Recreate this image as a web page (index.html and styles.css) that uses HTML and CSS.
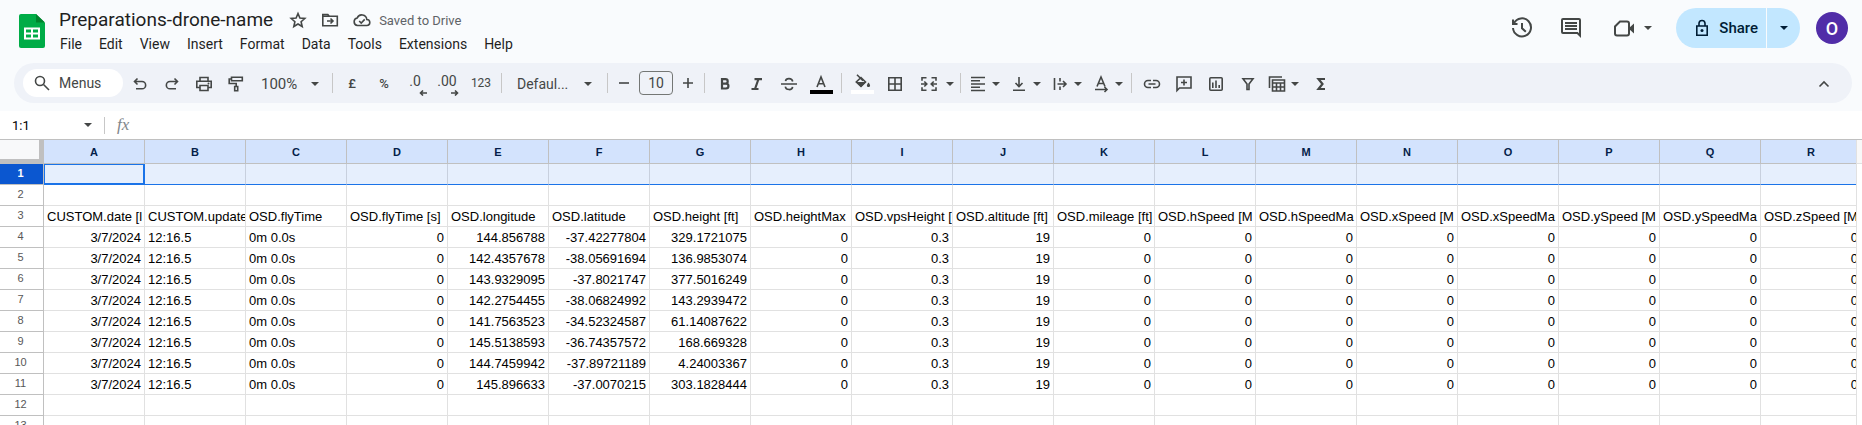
FILE: index.html
```html
<!DOCTYPE html>
<html lang="en">
<head>
<meta charset="utf-8">
<title>Preparations-drone-name</title>
<link rel="stylesheet" href="styles.css">
</head>
<body>
<div class="app">
<header class="chrome">
  <div class="titlebar">
    <svg class="logo" viewBox="0 0 26 34"><path fill="#00ac47" d="M2 0h15l9 9v23a2 2 0 0 1-2 2H2a2 2 0 0 1-2-2V2a2 2 0 0 1 2-2z"/><path fill="#00832d" d="M17 0l9 8.500h-9z"/><path fill="#fff" fill-rule="evenodd" d="M5 13.500h16v12H5zM7 15.500v3h5v-3zm7 0v3h5v-3zm-7 5v3h5v-3zm7 0v3h5v-3z"/></svg>
    <div class="doc">
      <div class="doc-row">
        <h1 class="doc-name">Preparations-drone-name</h1>
        <button class="mini" aria-label="Star"><svg class="ic" viewBox="0 0 20 20"><path class="s" d="M10 3.500l1.900 4.600 4.900.4-3.700 3.200 1.100 4.800-4.200-2.500-4.200 2.500 1.100-4.800-3.700-3.200 4.900-.4z"/></svg></button>
        <button class="mini" aria-label="Move"><svg class="ic" viewBox="0 0 20 20"><path class="s" d="M2.800 4.500h5l1.500 1.800h8v9.500H2.800zM2.800 6.300H9M7 11h6M10.500 8.500L13 11l-2.500 2.500"/></svg></button>
        <button class="saved"><svg class="ic" viewBox="0 0 20 20"><path class="s" d="M5.500 15.500a3.800 3.800 0 0 1-.3-7.500 5 5 0 0 1 9.600 1.500 3 3 0 0 1 0 6zM7.200 11l2 2 3.500-3.600"/></svg>Saved to Drive</button>
      </div>
      <nav class="menus">
        <button>File</button><button>Edit</button><button>View</button><button>Insert</button><button>Format</button><button>Data</button><button>Tools</button><button>Extensions</button><button>Help</button>
      </nav>
    </div>
    <div class="actions">
      <button class="act" aria-label="History"><svg class="ic24" viewBox="0 0 24 24"><path class="s2" d="M4 7.200A9 9 0 1 1 3 12M3 3.500V8h4.500M12 7v5.200l3.800 3.600"/></svg></button>
      <button class="act" aria-label="Comments"><svg class="ic24" viewBox="0 0 24 24"><path d="M22 4a2 2 0 0 0-2-2H4a2 2 0 0 0-2 2v12a2 2 0 0 0 2 2h14l4 4zm-2 13.200L18.800 16H4V4h16zM6 12h12v2H6zm0-3h12v2H6zm0-3h12v2H6z"/></svg></button>
      <button class="meet" aria-label="Meet"><svg class="ic24" viewBox="0 0 24 24"><path class="s2" d="M8 5.500h7a2 2 0 0 1 2 2v10a2 2 0 0 1-2 2H5a2 2 0 0 1-2-2V10.500z"/><path d="M17 12l5-4.500v10L17 13z"/></svg><i class="caret"></i></button>
      <div class="share">
        <button class="share-main"><svg class="ic" viewBox="0 0 20 20"><path class="s" d="M4.800 8h10.400v9.300H4.800zM7 8V5.500a3 3 0 0 1 6 0V8"/><circle cx="10" cy="12.600" r="1.500"/></svg>Share</button>
        <button class="share-more" aria-label="Share options"><i class="caret"></i></button>
      </div>
      <button class="avatar">O</button>
    </div>
  </div>
  <div class="toolbar">
    <button class="search"><svg class="ic" viewBox="0 0 20 20"><circle class="s" cx="8" cy="8" r="4.500"/><path class="s" d="M11.500 11.500l5.500 5.500"/></svg>Menus</button>
    <button class="tb" aria-label="Undo"><svg class="ic" viewBox="0 0 20 20"><path class="s" d="M7.500 4.500L4.500 7.500l3 3M4.800 7.500H12a3.500 3.500 0 0 1 0 7.300H6"/></svg></button>
    <button class="tb" aria-label="Redo"><svg class="ic" viewBox="0 0 20 20"><path class="s" d="M12.500 4.500l3 3-3 3M15.200 7.500H8a3.500 3.500 0 0 0 0 7.300h6"/></svg></button>
    <button class="tb" aria-label="Print"><svg class="ic" viewBox="0 0 20 20"><path class="s" d="M6 7V3.500h8V7M5.500 13.500H2.800V7.200h14.400v6.300h-2.700M6 11.500h8v5H6z"/><circle cx="14.500" cy="9.500" r="1"/></svg></button>
    <button class="tb" aria-label="Paint format"><svg class="ic" viewBox="0 0 20 20"><path class="s" d="M5.500 3.200h10.800v3.500H5.500zM5.500 5H3.200v4.500h7v3M8.700 12.500h3v4.300h-3z"/></svg></button>
    <button class="tb zoom">100%<i class="caret"></i></button>
    <i class="sep"></i>
    <button class="tb fmt">£</button>
    <button class="tb fmt">%</button>
    <button class="tb dec">.0<svg class="arrow" viewBox="0 0 8 6"><path class="s" d="M8 3H1.500M4 .5L1.500 3 4 5.500"/></svg></button>
    <button class="tb dec">.00<svg class="arrow" viewBox="0 0 8 6"><path class="s" d="M0 3h6.500M4 .5L6.500 3 4 5.500"/></svg></button>
    <button class="tb fmt small">123</button>
    <i class="sep"></i>
    <button class="tb font">Defaul...<i class="caret"></i></button>
    <i class="sep"></i>
    <button class="tb step" aria-label="Decrease"><svg class="ic" viewBox="0 0 20 20"><path class="s" d="M5 10h10"/></svg></button>
    <input class="size" value="10" aria-label="Font size">
    <button class="tb step" aria-label="Increase"><svg class="ic" viewBox="0 0 20 20"><path class="s" d="M5 10h10M10 5v10"/></svg></button>
    <i class="sep"></i>
    <button class="tb" aria-label="Bold"><svg class="ic" viewBox="0 0 20 20"><path class="b" d="M7 5.200h3.500a2.200 2.200 0 0 1 0 4.400H7zM7 9.600h4a2.400 2.400 0 0 1 0 4.900H7z"/></svg></button>
    <button class="tb" aria-label="Italic"><svg class="ic" viewBox="0 0 20 20"><path class="b" d="M7.500 5.200h7.500M4.500 15H11.500M11.500 5l-3.500 10"/></svg></button>
    <button class="tb" aria-label="Strikethrough"><svg class="ic" viewBox="0 0 20 20"><path class="s" d="M2 10h16M13.700 7.500C13 3.700 7 3.700 6.500 7.200M6.300 12.700c.6 3.800 7 3.800 7.300.2"/></svg></button>
    <button class="tb color" aria-label="Text color"><svg class="ic" viewBox="0 0 20 20"><path class="s" d="M6 13l4-10 4 10M7.500 9.800h5"/></svg><i class="swatch black"></i></button>
    <i class="sep"></i>
    <button class="tb color" aria-label="Fill color"><svg class="ic" viewBox="0 0 20 20"><path class="s" d="M5 .8l6 6M9 3.500L4.300 8 9 12.300 13.500 8z"/><path d="M4 8h10l-5 5zM16.500 8.500c2.500 3 1.700 4.500 0 4.500s-2.500-1.500 0-4.500z"/></svg><i class="swatch white"></i></button>
    <button class="tb borders" aria-label="Borders"><svg class="ic" viewBox="0 0 20 20"><path class="s" d="M3.800 3.800h12.400v12.400H3.800zM10 4v12M4 10h12"/></svg></button>
    <button class="tb split merge" aria-label="Merge"><svg class="ic" viewBox="0 0 20 20"><path class="s" d="M7.500 3.800H3v3M12.500 3.800H17v3M7.500 16.200H3v-3M12.500 16.200H17v-3M2 10h5.500M5.300 7.500L7.800 10l-2.500 2.500M18 10h-5.500M14.700 7.500L12.200 10l2.500 2.500"/></svg><i class="caret"></i></button>
    <i class="sep tight"></i>
    <button class="tb split" aria-label="Horizontal align"><svg class="ic" viewBox="0 0 20 20"><path class="s" d="M3 3.500h14M3 6.750h9M3 10h14M3 13.250h9M3 16.500h14"/></svg><i class="caret"></i></button>
    <button class="tb split" aria-label="Vertical align"><svg class="ic" viewBox="0 0 20 20"><path class="s" d="M10 3v9M6.500 9l3.500 3.500L13.500 9M4 16.200h12"/></svg><i class="caret"></i></button>
    <button class="tb split" aria-label="Wrapping"><svg class="ic" viewBox="0 0 20 20"><path class="s" d="M4.500 4v12M10 4v3.500M10 12.500V16M7.500 10h8M13 7l3 3-3 3"/></svg><i class="caret"></i></button>
    <button class="tb split" aria-label="Rotation"><svg class="ic" viewBox="0 0 20 20"><path class="s" d="M6 12.500l4-9.500 4 9.500M7.500 9.500h5M4 15.500h11.500M13.500 13l2.500 2.500-2.500 2.500"/></svg><i class="caret"></i></button>
    <i class="sep tight"></i>
    <button class="tb" aria-label="Link"><svg class="ic" viewBox="0 0 20 20"><path class="s" d="M9 6.500H6a3.500 3.500 0 0 0 0 7h3M11 6.500h3a3.500 3.500 0 0 1 0 7h-3M6.500 10h7"/></svg></button>
    <button class="tb" aria-label="Comment"><svg class="ic" viewBox="0 0 20 20"><path class="s" d="M3 3h14v11H5.500L3 16.500zM10 5.500v6M7 8.500h6"/></svg></button>
    <button class="tb" aria-label="Chart"><svg class="ic" viewBox="0 0 20 20"><rect class="s" x="3.800" y="3.800" width="12.400" height="12.400" rx="1"/><path class="s" d="M6.800 8.500V14M10 6.500V14M13.200 11v3"/></svg></button>
    <button class="tb" aria-label="Filter"><svg class="ic" viewBox="0 0 20 20"><path class="s" d="M5 4.700h10L11 10v5.500H9V10z"/></svg></button>
    <button class="tb split" aria-label="Filter views"><svg class="ic" viewBox="0 0 20 20"><path class="s" d="M2.500 14V3H15M5.500 6h12v11h-12zM5.500 9h12M5.500 13h12M9.500 9v8M13.500 9v8"/></svg><i class="caret"></i></button>
    <button class="tb" aria-label="Functions"><svg class="ic" viewBox="0 0 20 20"><path class="b" d="M14 5H7.500l4 5-4 5H14"/></svg></button>
    <button class="tb collapse" aria-label="Hide menus"><svg class="ic" viewBox="0 0 20 20"><path class="s" d="M5.500 12.500L10 8l4.500 4.500"/></svg></button>
  </div>
</header>
<div class="formula">
  <button class="range">1:1<i class="caret"></i></button>
  <i class="bar"></i>
  <span class="fx">fx</span>
</div>
<main class="sheet">
  <div class="view"><table class="grid" id="grid"></table></div>
  <div class="gutter"></div>
</main>
</div>
<script src="grid.js"></script>
</body>
</html>
```
FILE: styles.css
```css
* { box-sizing: border-box; }
body { margin: 0; font-family: Roboto, "Liberation Sans", sans-serif; font-size: 14px; color: #1f1f1f; background: #fff; }
button { border: 0; background: none; padding: 0; margin: 0; font: inherit; color: inherit; cursor: pointer; display: flex; align-items: center; }
svg { display: block; flex: none; fill: #444746; }
.ic { width: 20px; height: 20px; }
.ic24 { width: 24px; height: 24px; }
.s, .s2, .b { fill: none; stroke: #444746; stroke-width: 1.6; }
.s2 { stroke-width: 2; }
.b { stroke-width: 2.2; }
.caret { flex: none; border: 4px solid transparent; border-top-color: #444746; border-bottom: 0; }
.app { height: 100vh; display: flex; flex-direction: column; overflow: hidden; }

.chrome { background: #f9fbfd; padding-bottom: 8px; flex: none; }
.titlebar { display: flex; height: 63px; padding: 8px 14px 0 19px; }
.logo { width: 26px; height: 34px; margin-top: 6px; }
.doc { padding-left: 14px; }
.doc-row { display: flex; align-items: center; height: 24px; }
.doc-name { margin: 0 9px 0 0; font-size: 19px; font-weight: 400; line-height: 24px; color: #1f1f1f; }
.mini { width: 32px; justify-content: center; }
.saved { padding-left: 6px; font-size: 13px; color: #5f6368; gap: 7px; }
.menus { display: flex; gap: 17px; padding: 2px 0 0 1px; line-height: 20px; }
.actions { display: flex; align-items: center; height: 40px; margin-left: auto; }
.act { width: 49px; justify-content: center; }
.meet { gap: 8px; margin: 0 24px 0 17px; }
.share { display: flex; height: 40px; border-radius: 20px; overflow: hidden; gap: 1px; margin-right: 16px; }
.share button { background: #c2e7ff; color: #001d35; font-weight: 500; font-size: 15px; }
.share svg { fill: #001d35; }
.share .s { stroke: #001d35; }
.share .caret { border-top-color: #001d35; }
.share-main { padding: 0 8px 0 16px; gap: 7px; }
.share-more { width: 33px; justify-content: center; }
.avatar { width: 32px; height: 32px; border-radius: 50%; background: #512da8; color: #fff; font-size: 18px; font-weight: 500; justify-content: center; }

.toolbar { display: flex; align-items: center; height: 40px; margin: 0 10px 0 14px; padding: 0 12px 0 9px; border-radius: 20px; background: #eff2f8; color: #444746; }
.search { width: 100px; height: 28px; margin-right: 1px; padding-left: 9px; gap: 7px; border-radius: 14px; background: #fff; }
.tb { width: 32px; height: 30px; padding-top: 2px; justify-content: center; flex: none; }
.zoom { width: 76px; padding: 2px 9px 0; justify-content: space-between; font-size: 15px; }
.sep { flex: none; width: 1px; height: 20px; margin: 0 4px; background: #c7c7c7; }
.tight { margin-left: 2px; }
.fmt { padding: 0 2px 0 0; font-size: 13px; font-weight: 500; }
.small { padding: 0; font-size: 12px; font-weight: 400; }
.dec { position: relative; padding: 0 4px 4px 0; }
.arrow { position: absolute; right: 6px; bottom: 2px; width: 8px; height: 6px; }
.font { width: 97px; padding: 1px 11px 0; justify-content: space-between; }
.step { width: 24px; padding: 0; }
.size { width: 34px; height: 24px; margin: 0 3px; padding: 0; border: 1px solid #747775; border-radius: 4px; background: none; font: inherit; color: inherit; text-align: center; }
.color { flex-direction: column; }
.color .ic { margin-bottom: -4px; }
.swatch { width: 23px; height: 4px; }
.black { background: #000; }
.white { background: #fff; }
.borders { width: 34px; }
.split { width: 41px; justify-content: flex-start; padding-left: 3px; gap: 4px; }
.merge { width: 46px; padding-left: 7px; gap: 7px; }
.collapse { margin-left: auto; }

.formula { display: flex; align-items: center; flex: none; height: 29px; border-bottom: 1px solid #c0c0c0; }
.range { width: 104px; padding: 0 12px; justify-content: space-between; font-size: 13px; color: #000; }
.bar { width: 1px; height: 17px; background: #c7c7c7; }
.fx { padding-left: 12px; font: italic 17px "Liberation Serif", serif; color: #80868b; }

.sheet { flex: 1; min-height: 0; display: flex; }
.view { flex: 1; min-width: 0; overflow: hidden; border-right: 1px solid #e1e1e1; }
.gutter { width: 5px; height: 24px; background: #f8f8f8; border-bottom: 1px solid #e1e1e1; }
.grid { table-layout: fixed; border-collapse: separate; border-spacing: 0; width: 1862px; }
.col-head { width: 44px; }
.grid th, .grid td { height: 21px; padding: 0 3px; border: 0 solid #e1e1e1; border-width: 0 1px 1px 0; overflow: hidden; white-space: nowrap; }
.grid td { font: 13px/18px "Liberation Sans", Arial, sans-serif; color: #000; vertical-align: bottom; text-align: left; }
.grid td.num { text-align: right; }
.grid thead th { height: 24px; border-color: #c0c0c0; background: #d3e3fd; color: #041e49; font: 700 11px/16px "Liberation Sans", Arial, sans-serif; }
.grid thead .corner { background: #f8f9fa; border-color: #c0c0c0; border-width: 0 5px 5px 0; }
.grid tbody th { padding: 0 5px 2px 3px; border-color: #c0c0c0; color: #575757; font: 400 11px/16px "Liberation Sans", Arial, sans-serif; }
.grid .picked th { background: #0b57d0; color: #fff; font-weight: 700; }
.grid .picked td { background: #e6effd; border-color: #1a73e8; border-right-color: #c8d0de; }
.grid .picked .active { border-right-color: #1a73e8; box-shadow: inset 0 0 0 1px #1a73e8; }
```
FILE: grid.js
```js
const letters = 'ABCDEFGHIJKLMNOPQR'.split('');
const heads = ['CUSTOM.date [l', 'CUSTOM.update', 'OSD.flyTime', 'OSD.flyTime [s]', 'OSD.longitude', 'OSD.latitude', 'OSD.height [ft]', 'OSD.heightMax', 'OSD.vpsHeight [', 'OSD.altitude [ft]', 'OSD.mileage [ft]', 'OSD.hSpeed [M', 'OSD.hSpeedMa', 'OSD.xSpeed [M', 'OSD.xSpeedMa', 'OSD.ySpeed [M', 'OSD.ySpeedMa', 'OSD.zSpeed [M'];
const points = [
  ['144.856788', '-37.42277804', '329.1721075'],
  ['142.4357678', '-38.05691694', '136.9853074'],
  ['143.9329095', '-37.8021747', '377.5016249'],
  ['142.2754455', '-38.06824992', '143.2939472'],
  ['141.7563523', '-34.52324587', '61.14087622'],
  ['145.5138593', '-36.74357572', '168.669328'],
  ['144.7459942', '-37.89721189', '4.24003367'],
  ['145.896633', '-37.0070215', '303.1828444']
];
const blank = letters.map(() => '');
const rows = [blank, blank, heads];
for (const p of points) {
  rows.push(['3/7/2024', '12:16.5', '0m 0.0s', '0', ...p, '0', '0.3', '19', '0', '0', '0', '0', '0', '0', '0', '0']);
}
rows.push(blank, blank);

let html = '<colgroup><col class="col-head">' + letters.map(() => '<col>').join('') + '</colgroup>';
html += '<thead><tr><th class="corner"></th>' + letters.map(l => `<th>${l}</th>`).join('') + '</tr></thead><tbody>';
rows.forEach((row, r) => {
  html += `<tr class="${r === 0 ? 'picked' : ''}"><th>${r + 1}</th>`;
  row.forEach((v, c) => {
    const num = r > 2 && c !== 1 && c !== 2 ? 'num' : '';
    html += `<td class="${r === 0 && c === 0 ? 'active' : num}">${v}</td>`;
  });
  html += '</tr>';
});
document.getElementById('grid').innerHTML = html + '</tbody>';
```
